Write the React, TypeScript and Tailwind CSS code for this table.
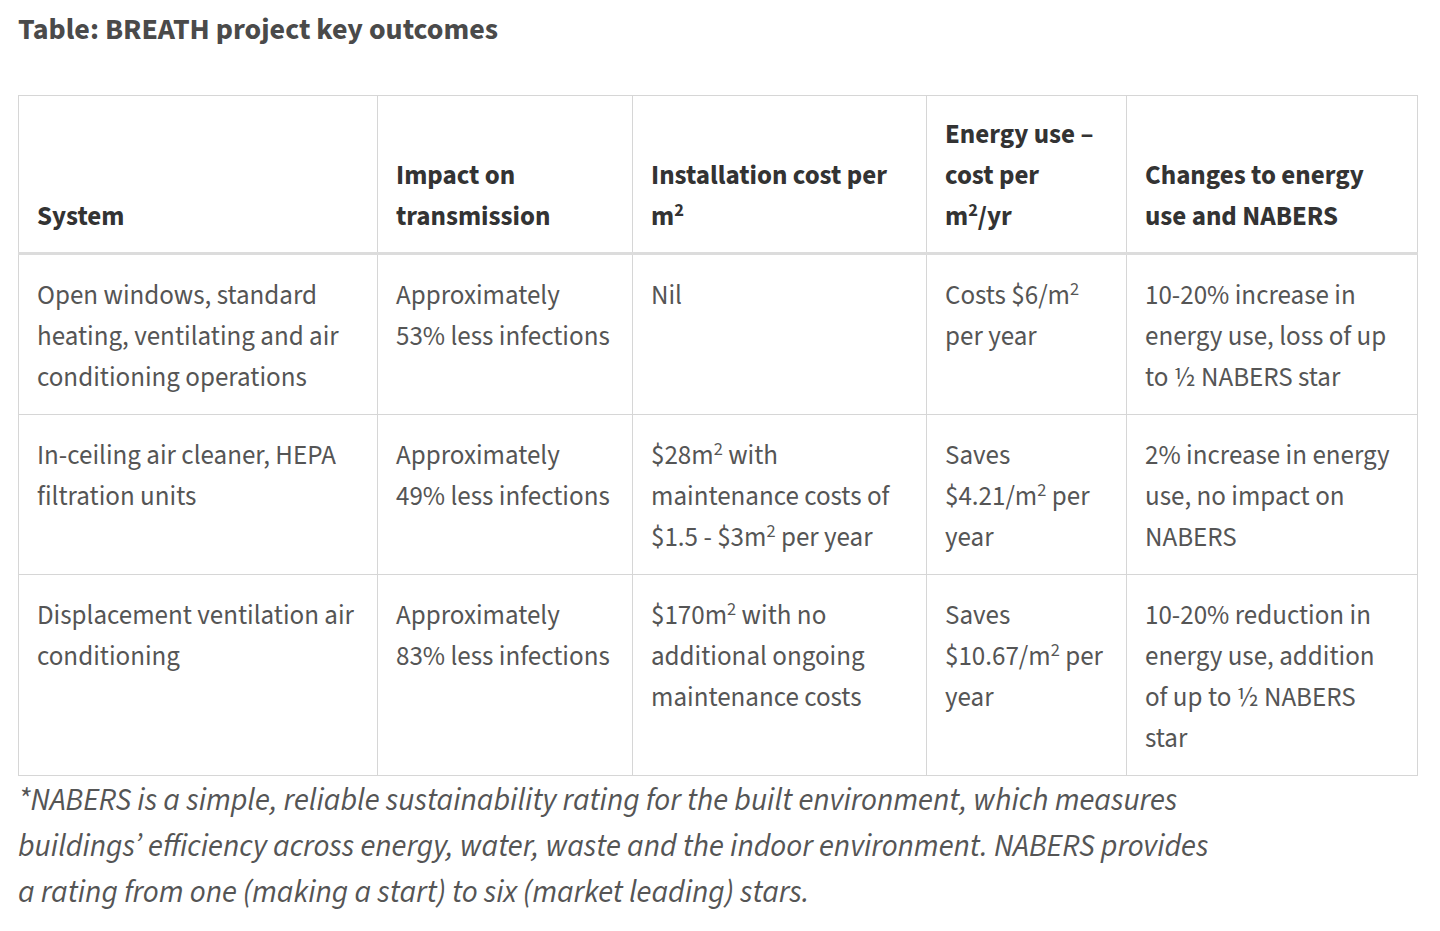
const font = { fontFamily: '"Source Sans Pro", "Source Sans 3", Lato, sans-serif' };

const Sup = () => <sup className="text-[0.68em]">2</sup>;

const headers = [
  <>System</>,
  <>Impact on transmission</>,
  <>
    Installation cost per m<Sup />
  </>,
  <>
    Energy use – cost per m<Sup />/yr
  </>,
  <>Changes to energy use and NABERS</>,
];

const rows = [
  [
    <>Open windows, standard heating, ventilating and air conditioning operations</>,
    <>Approximately 53% less infections</>,
    <>Nil</>,
    <>
      Costs $6/m<Sup /> per year
    </>,
    <>10-20% increase in energy use, loss of up to ½ NABERS star</>,
  ],
  [
    <>In-ceiling air cleaner, HEPA filtration units</>,
    <>Approximately 49% less infections</>,
    <>
      $28m<Sup /> with maintenance costs of $1.5 - $3m<Sup /> per year
    </>,
    <>
      Saves $4.21/m<Sup /> per year
    </>,
    <>2% increase in energy use, no impact on NABERS</>,
  ],
  [
    <>Displacement ventilation air conditioning</>,
    <>Approximately 83% less infections</>,
    <>
      $170m<Sup /> with no additional ongoing maintenance costs
    </>,
    <>
      Saves $10.67/m<Sup /> per year
    </>,
    <>10-20% reduction in energy use, addition of up to ½ NABERS star</>,
  ],
];

const widths = ["w-[359px]", "w-[255px]", "w-[294px]", "w-[200px]", "w-[291px]"];

export default function App() {
  return (
    <div className="min-h-[931px] bg-white px-[18px] pt-[10px]" style={font}>
      <h3 className="text-[30px] leading-[40px] font-bold text-[#4a4a4a]">
        Table: BREATH project key outcomes
      </h3>

      <table className="mt-[45px] w-[1400px] table-fixed border-collapse text-[27px] leading-[41px]">
        <colgroup>
          {widths.map((w) => (
            <col key={w} className={w} />
          ))}
        </colgroup>
        <thead>
          <tr>
            {headers.map((h, i) => (
              <th
                key={i}
                className="border border-[#d6d6d6] border-b-[3px] border-b-[#dcdcdc] px-[18px] pt-[18px] pb-[15px] align-bottom text-left font-bold text-[#333333]"
              >
                {h}
              </th>
            ))}
          </tr>
        </thead>
        <tbody>
          {rows.map((r, ri) => (
            <tr key={ri}>
              {r.map((c, ci) => (
                <td
                  key={ci}
                  className="border border-[#d6d6d6] px-[18px] pt-[20px] pb-[16px] align-top text-[#555555]"
                >
                  {c}
                </td>
              ))}
            </tr>
          ))}
        </tbody>
      </table>

      <p className="mt-[1px] text-[31px] leading-[46px] italic text-[#555555] whitespace-nowrap">
        *NABERS is a simple, reliable sustainability rating for the built environment, which measures
        <br />
        buildings’ efficiency across energy, water, waste and the indoor environment. NABERS provides
        <br />
        a rating from one (making a start) to six (market leading) stars.
      </p>
    </div>
  );
}
